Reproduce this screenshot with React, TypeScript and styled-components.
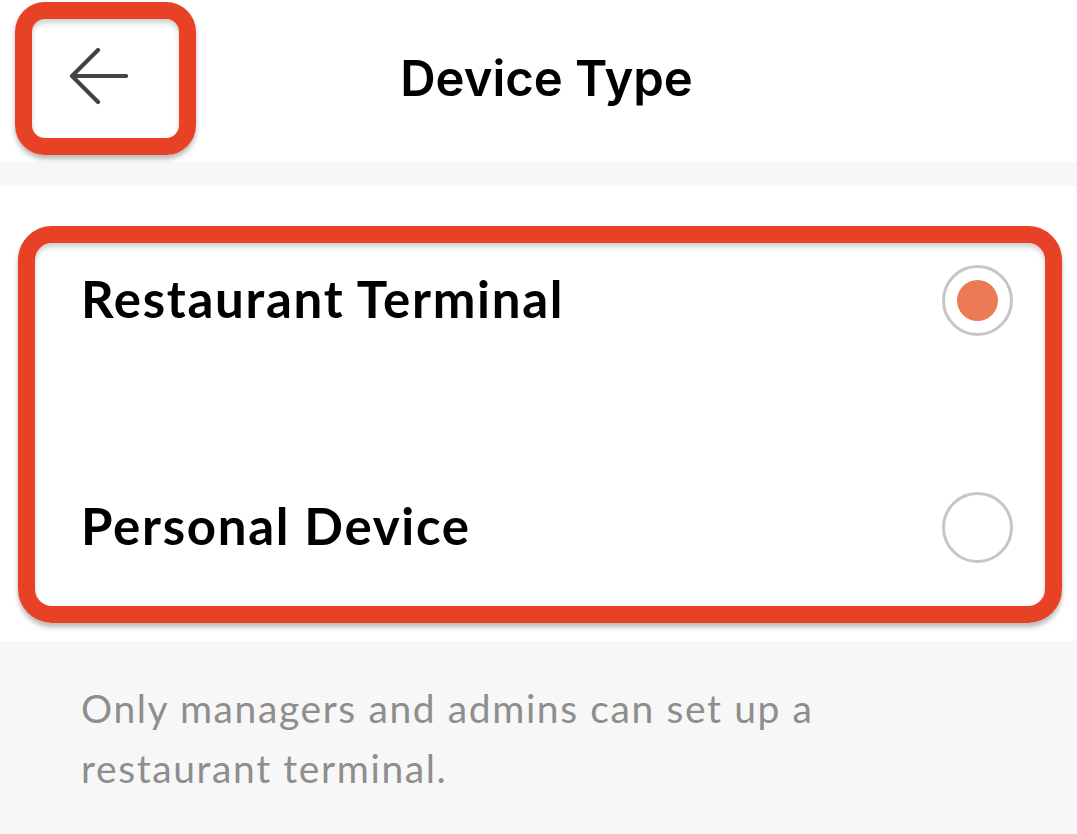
import React, { useState } from "react";
import styled, { createGlobalStyle } from "styled-components";

const GlobalStyle = createGlobalStyle`
    html, body {
        margin: 0;
        padding: 0;
        background: #f7f7f7;
    }

    * {
        box-sizing: border-box;
    }
`;

interface DeviceOption {
    id: string;
    label: string;
}

const options: DeviceOption[] = [
    { id: 'terminal', label: 'Restaurant Terminal' },
    { id: 'personal', label: 'Personal Device' },
];

const BackArrow = () => (
    <svg width="60" height="60" viewBox="0 0 60 60" fill="none">
        <path
            d="M58 29H4M30 3L4 29l26 26"
            stroke="#444"
            strokeWidth="4.2"
            strokeLinecap="round"
            strokeLinejoin="round"
        />
    </svg>
);

const App = () => {
    const [selected, setSelected] = useState<string>('terminal');

    return (
        <Screen>
            <GlobalStyle />

            <Header>
                <BackButton aria-label="Back">
                    <BackArrow />
                    <Highlight $radius={30} />
                </BackButton>
                <Title>Device Type</Title>
            </Header>

            <Spacer />

            <OptionsList>
                {options.map(option => (
                    <OptionRow key={option.id} onClick={() => setSelected(option.id)}>
                        <OptionLabel>{option.label}</OptionLabel>
                        <Radio $checked={selected === option.id} />
                    </OptionRow>
                ))}
                <ListHighlight $radius={34} />
            </OptionsList>

            <Note>Only managers and admins can set up a restaurant terminal.</Note>
        </Screen>
    );
};

const Screen = styled.div`
    min-height: 100vh;
    background: #f7f7f7;
    display: flex;
    flex-direction: column;
`;

const Header = styled.header`
    height: 162px;
    background: #fff;
    display: grid;
    grid-template-columns: 196px 1fr 196px;
    align-items: center;
`;

const BackButton = styled.button`
    position: relative;
    align-self: start;
    margin: 2px 0 0 15px;
    width: 181px;
    height: 153px;
    padding: 0 15px 4px 0;
    border: none;
    background: transparent;
    display: flex;
    align-items: center;
    justify-content: center;
    cursor: pointer;
`;

const Highlight = styled.div<{ $radius: number }>`
    position: absolute;
    inset: 0;
    border: 17px solid #e84226;
    border-radius: ${props => props.$radius}px;
    box-shadow: 0 4px 5px rgba(0, 0, 0, 0.28), inset 0 4px 5px rgba(0, 0, 0, 0.18);
    pointer-events: none;
`;

const ListHighlight = styled(Highlight)`
    inset: 40px 15px 18px 18px;
`;

const Title = styled.h1`
    margin: 0 0 6px 0;
    padding-left: 16px;
    text-align: center;
    font-family: Inter, "Liberation Sans", sans-serif;
    font-weight: 600;
    font-size: 49px;
    color: #000;
    letter-spacing: 0;
`;

const Spacer = styled.div`
    height: 24px;
    background: #f7f7f7;
`;

const OptionsList = styled.div`
    position: relative;
    background: #fff;
    display: grid;
    grid-template-rows: 228px 227px;
`;

const OptionRow = styled.div`
    display: flex;
    align-items: center;
    justify-content: space-between;
    padding: 0 64px 0 81px;
    cursor: pointer;
`;

const OptionLabel = styled.span`
    font-family: Lato, "Noto Sans", sans-serif;
    font-weight: 700;
    font-size: 51px;
    color: #000;
    letter-spacing: 1.7px;
    margin-top: -4px;
`;

const Radio = styled.span<{ $checked?: boolean }>`
    position: relative;
    width: 71px;
    height: 71px;
    border-radius: 50%;
    border: 3px solid #c6c6c6;
    flex-shrink: 0;

    &::after {
        content: '';
        position: absolute;
        inset: 12px;
        border-radius: 50%;
        background: #ec7b55;
        display: ${props => props.$checked ? 'block' : 'none'};
    }
`;

const Note = styled.p`
    margin: 0;
    padding: 37px 200px 0 81px;
    font-family: Lato, "Noto Sans", sans-serif;
    font-weight: 400;
    font-size: 39px;
    line-height: 60px;
    color: #8e8e8e;
    letter-spacing: 1.6px;
`;

export default App;
